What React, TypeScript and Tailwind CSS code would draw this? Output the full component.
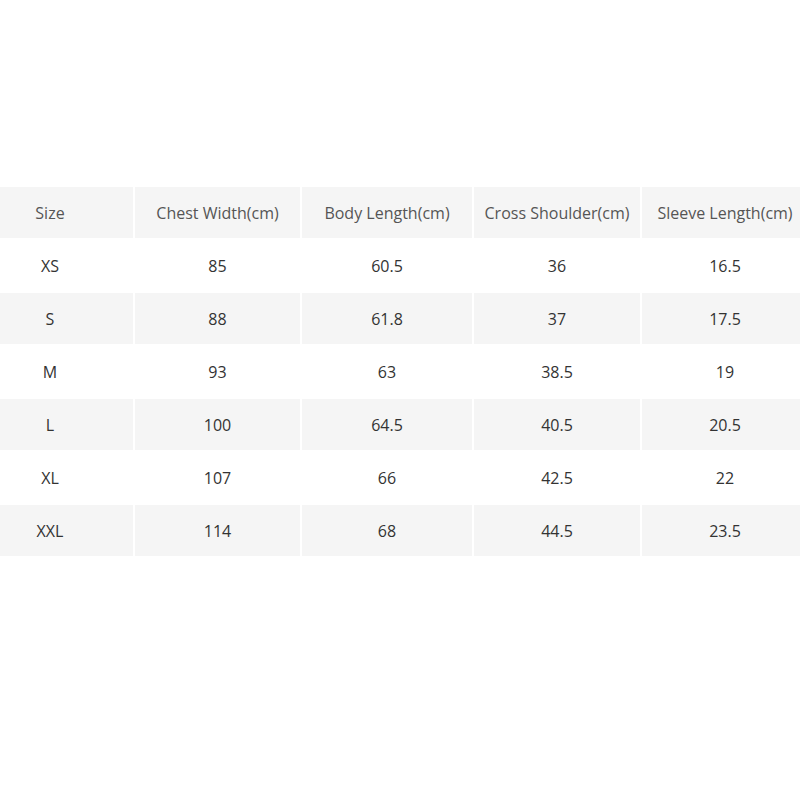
const headers = ["Size", "Chest Width(cm)", "Body Length(cm)", "Cross Shoulder(cm)", "Sleeve Length(cm)"];

const rows = [
  ["XS", "85", "60.5", "36", "16.5"],
  ["S", "88", "61.8", "37", "17.5"],
  ["M", "93", "63", "38.5", "19"],
  ["L", "100", "64.5", "40.5", "20.5"],
  ["XL", "107", "66", "42.5", "22"],
  ["XXL", "114", "68", "44.5", "23.5"],
];

export default function App() {
  return (
    <div className="w-[800px] h-[800px] bg-white overflow-hidden" style={{ fontFamily: '"Open Sans", sans-serif' }}>
      <div className="pt-[187px] -ml-[33px]">
        <div className="grid grid-cols-[166px_165px_170px_166px_166px] gap-[2px] w-max">
          {headers.map((h) => (
            <div key={h} className="h-[51px] flex items-center justify-center bg-[#f5f5f5] text-[16px] text-[#555]">
              {h}
            </div>
          ))}
          {rows.map((row, i) =>
            row.map((cell, j) => (
              <div
                key={`${i}-${j}`}
                className={`h-[51px] flex items-center justify-center text-[16px] text-[#333] ${
                  i % 2 === 1 ? "bg-[#f5f5f5]" : "bg-white"
                }`}
              >
                {cell}
              </div>
            ))
          )}
        </div>
      </div>
    </div>
  );
}
